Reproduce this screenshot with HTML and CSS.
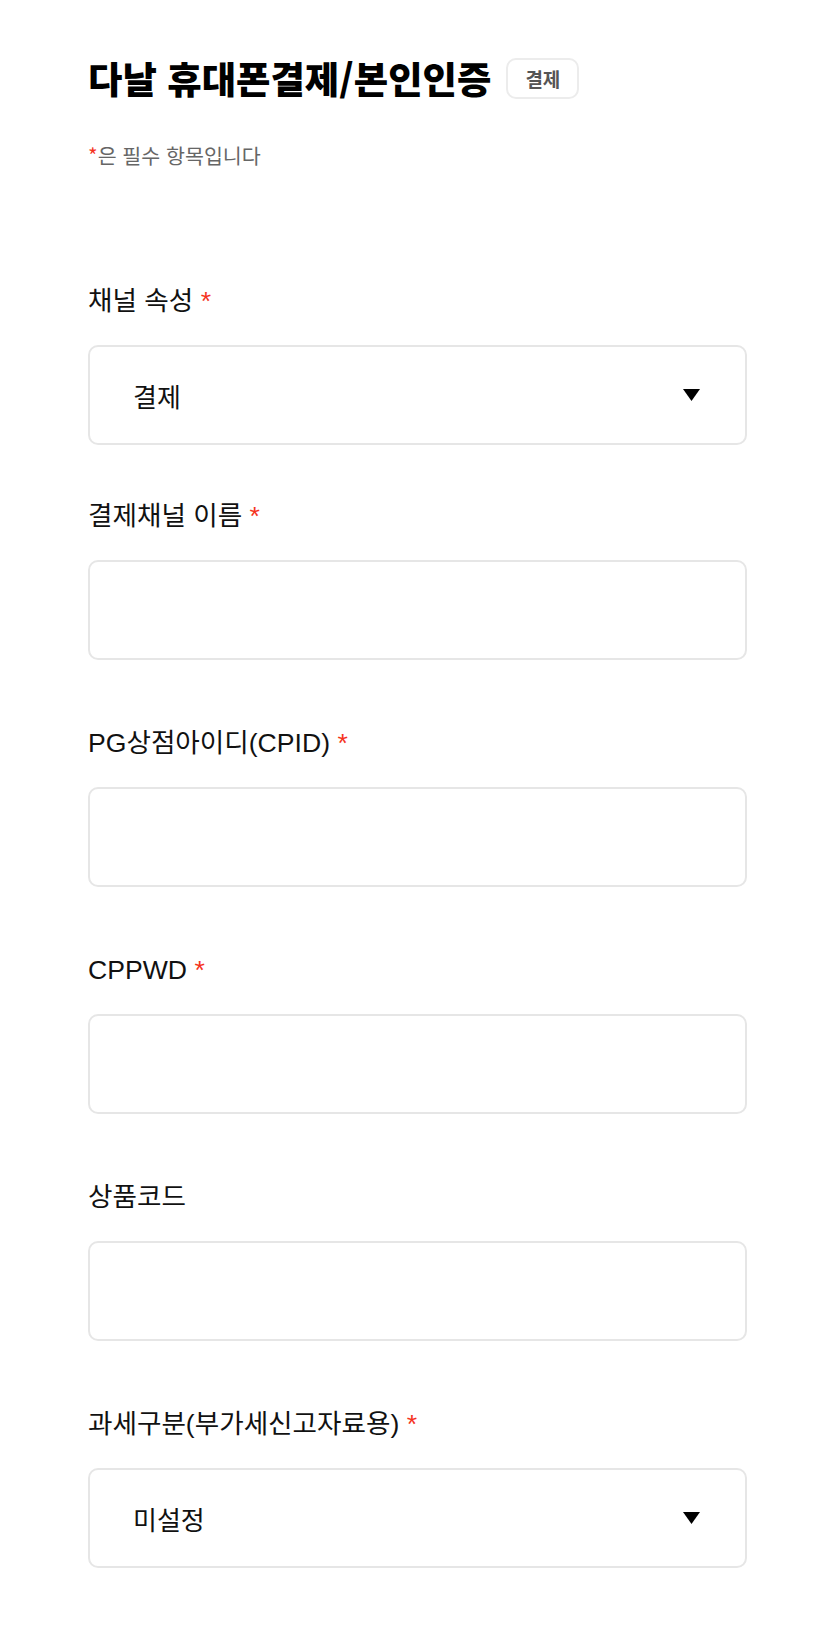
FILE: index.html
```html
<!DOCTYPE html>
<html lang="ko">
<head>
<meta charset="utf-8">
<title>다날 휴대폰결제/본인인증</title>
<link rel="stylesheet" href="styles.css">
</head>
<body>
<main class="page">
  <header class="head">
    <h1 class="title">다날 휴대폰결제/본인인증</h1>
    <span class="badge">결제</span>
  </header>
  <p class="note"><span class="req">*</span>은 필수 항목입니다</p>

  <form class="form">
    <div class="field field-first">
      <label class="label">채널 속성 <span class="req">*</span></label>
      <div class="select">
        <span class="select-value">결제</span>
        <svg class="arrow" width="17" height="12" viewBox="0 0 17 12"><path d="M0 0H17L8.5 12Z" fill="#000"/></svg>
      </div>
    </div>

    <div class="field">
      <label class="label">결제채널 이름 <span class="req">*</span></label>
      <input class="input" type="text">
    </div>

    <div class="field">
      <label class="label">PG상점아이디(CPID) <span class="req">*</span></label>
      <input class="input" type="text">
    </div>

    <div class="field">
      <label class="label">CPPWD <span class="req">*</span></label>
      <input class="input" type="text">
    </div>

    <div class="field">
      <label class="label">상품코드</label>
      <input class="input" type="text">
    </div>

    <div class="field">
      <label class="label">과세구분(부가세신고자료용) <span class="req">*</span></label>
      <div class="select">
        <span class="select-value">미설정</span>
        <svg class="arrow" width="17" height="12" viewBox="0 0 17 12"><path d="M0 0H17L8.5 12Z" fill="#000"/></svg>
      </div>
    </div>
  </form>
</main>
</body>
</html>
```

FILE: styles.css
```css
html, body {
  margin: 0;
  padding: 0;
  background: #fff;
}

body {
  font-family: "Liberation Sans", "Noto Sans CJK KR", sans-serif;
  color: #111;
}

.page {
  padding: 56px 71px 40px 88px;
}

.head {
  display: flex;
  align-items: center;
  gap: 15px;
  height: 44px;
}

.title {
  margin: 0;
  font-family: "Noto Sans CJK KR", sans-serif;
  font-weight: 900;
  font-size: 37.4px;
  line-height: 44px;
  letter-spacing: 0;
  color: #000;
}

.badge {
  display: flex;
  align-items: center;
  justify-content: center;
  box-sizing: border-box;
  width: 73px;
  height: 41px;
  border: 2px solid #ececec;
  border-radius: 10px;
  font-family: "Noto Sans CJK KR", sans-serif;
  font-weight: 700;
  font-size: 19px;
  color: #555;
}

.note {
  margin: 43px 0 0;
  font-family: "Noto Sans CJK KR", sans-serif;
  font-size: 20.6px;
  line-height: 24px;
  color: #666;
}

.req {
  color: #f5331e;
}

.form {
  display: flex;
  flex-direction: column;
  margin-top: 119px;
}

.field {
  display: flex;
  flex-direction: column;
  gap: 29px;
  margin-bottom: 68px;
}

.field-first {
  margin-bottom: 56px;
}

.label {
  font-size: 26.6px;
  line-height: 30px;
  color: #111;
}

.input,
.select {
  box-sizing: border-box;
  width: 100%;
  height: 100px;
  border: 2px solid #e6e6e6;
  border-radius: 10px;
  background: #fff;
  margin: 0;
  font: inherit;
}

.input {
  appearance: none;
  outline: none;
  padding: 0 44px;
}

.select {
  display: flex;
  align-items: center;
  justify-content: space-between;
  padding: 0 45px 0 43px;
}

.select-value {
  font-family: "Noto Sans CJK KR", sans-serif;
  font-size: 26px;
  color: #111;
}

.arrow {
  display: block;
}
```
